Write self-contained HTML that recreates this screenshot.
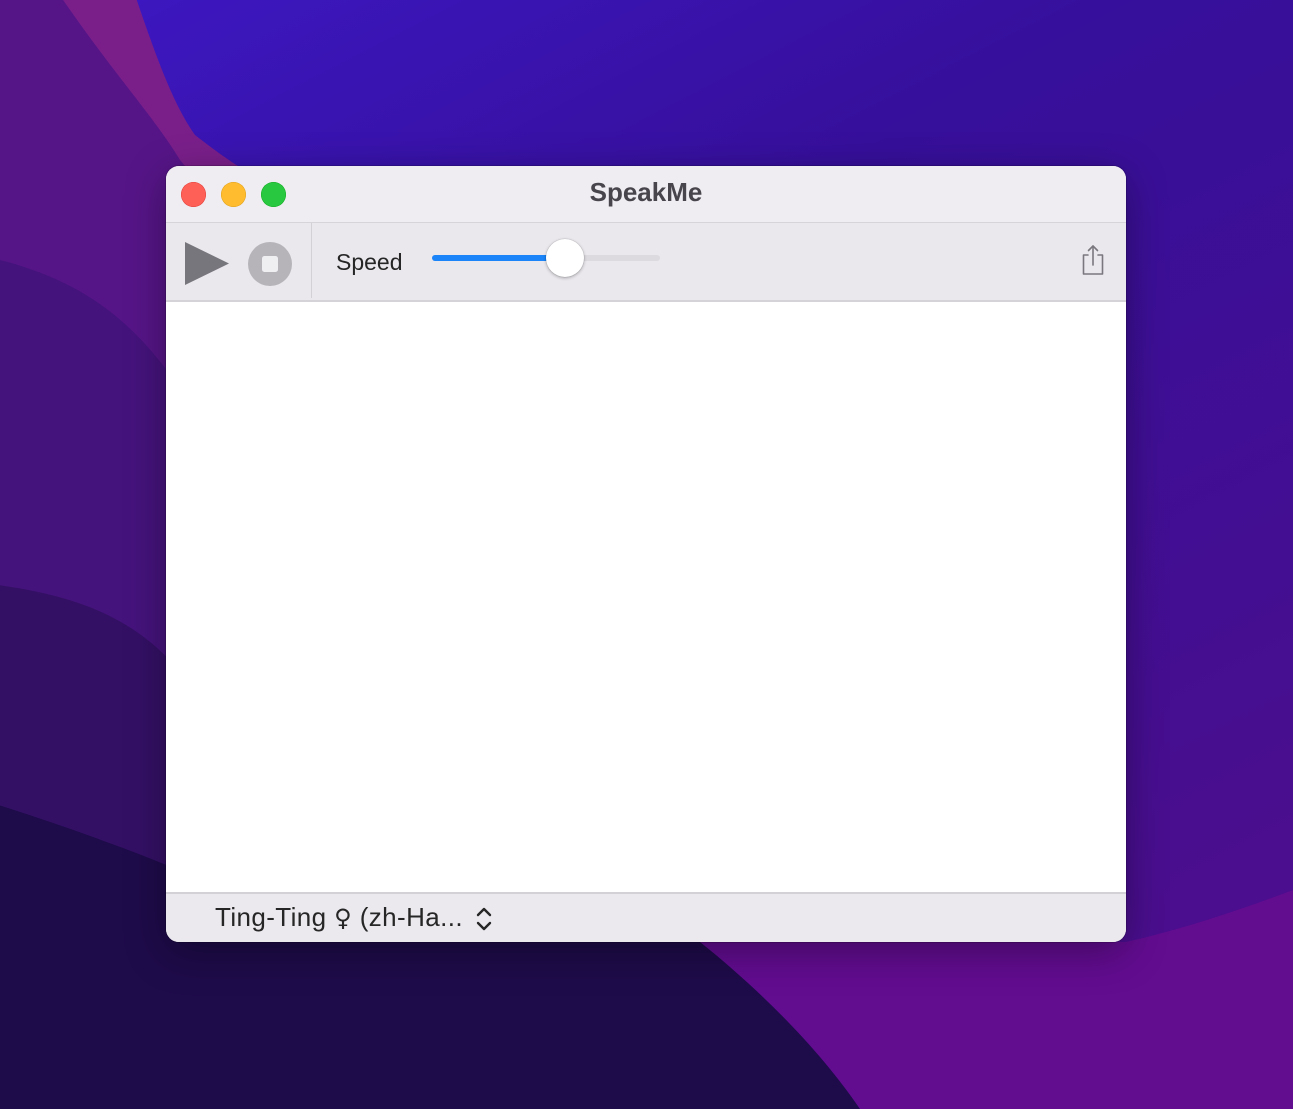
<!DOCTYPE html>
<html><head><meta charset="utf-8">
<style>
html,body{margin:0;padding:0;width:1293px;height:1109px;overflow:hidden;position:relative;font-family:"Liberation Sans","DejaVu Sans",sans-serif;}
#bg{position:absolute;left:0;top:0;display:block;overflow:hidden;}
.win{position:absolute;left:166px;top:166px;width:960px;height:776px;border-radius:13px;overflow:hidden;background:#fff;box-shadow:0 10px 40px rgba(0,0,0,0.35),0 0 0 1px rgba(0,0,0,0.15);}
.title{position:absolute;left:0;top:0;width:960px;height:56px;background:#efedf2;border-bottom:1px solid #d6d4d9;}
.title .t{position:absolute;left:0;width:960px;top:11px;text-align:center;font-weight:bold;font-size:26px;color:#48464c;}
.dot{position:absolute;top:16px;width:25px;height:25px;border-radius:50%;}
.tool{position:absolute;left:0;top:57px;width:960px;height:77px;background:#eae8ed;border-bottom:2px solid #d5d3d8;}
.vdiv{position:absolute;left:145px;top:0;width:1px;height:75px;background:#d3d1d6;}
.speed{position:absolute;left:170px;top:26px;font-size:23px;color:#262626;}
.track{position:absolute;left:266px;top:32px;width:228px;height:6px;border-radius:3px;background:#dcdadf;}
.fill{position:absolute;left:266px;top:32px;width:134px;height:6px;border-radius:3px;background:#1a84f8;}
.knob{position:absolute;left:380px;top:16px;width:38px;height:38px;border-radius:50%;background:#fff;box-shadow:0 1px 3px rgba(0,0,0,0.3),0 0 0 0.5px rgba(0,0,0,0.1);}
.foot{position:absolute;left:0;top:726px;width:960px;height:50px;background:#ebe9ee;border-top:2px solid #d3d1d6;}
.foot .v{position:absolute;left:49px;top:8px;font-size:26px;color:#262626;white-space:nowrap;letter-spacing:0.4px;}
.foot .v .s{font-family:"DejaVu Sans",sans-serif;font-size:24px;}
</style></head><body>
<svg id="bg" width="1293" height="1109" viewBox="0 0 1293 1109">
<defs>
<linearGradient id="g0" x1="0" y1="0" x2="0.6" y2="1">
<stop offset="0" stop-color="#3d18c4"/><stop offset="0.4" stop-color="#360f9a"/><stop offset="1" stop-color="#4a0e8e"/>
</linearGradient>
</defs>
<rect width="1293" height="1109" fill="url(#g0)"/>
<g>
<path d="M-50 -50 L120 -50 C150 40 170 100 195 135 C240 170 260 180 300 200 L300 1109 L-50 1109 Z" fill="#7a1f8a"/>
<path d="M-50 -50 L30 -50 C100 60 150 110 180 160 C230 220 260 280 290 330 L290 1109 L-50 1109 Z" fill="#561587"/>
<path d="M-50 250 C80 270 140 320 200 420 L200 1109 L-50 1109 Z" fill="#45137c"/>
<path d="M-50 580 C80 590 150 620 200 700 L200 1109 L-50 1109 Z" fill="#341065"/>
<path d="M640 942 L1126 942 C1180 930 1240 910 1293 890 L1293 1109 L860 1109 C800 1050 720 990 640 942 Z" fill="#620c90"/>
<path d="M-50 790 C150 850 250 900 330 942 L700 942 C760 990 820 1050 860 1109 L-50 1109 Z" fill="#1e0b4a"/>
</g>
</svg>
<div class="win">
 <div class="title">
  <div class="dot" style="left:15px;background:#fe5f57;box-shadow:inset 0 0 0 0.5px #e0443e"></div>
  <div class="dot" style="left:55px;background:#febc2e;box-shadow:inset 0 0 0 0.5px #dea123"></div>
  <div class="dot" style="left:95px;background:#28c840;box-shadow:inset 0 0 0 0.5px #1aab29"></div>
  <div class="t">SpeakMe</div>
 </div>
 <div class="tool">
  <svg style="position:absolute;left:0;top:0" width="140" height="76">
   <polygon points="19,19 19,62 63,40.5" fill="#78767d"/>
   <circle cx="104" cy="41" r="22" fill="#b6b4b9"/>
   <rect x="96" y="33" width="16" height="16" rx="2.5" fill="#efeef1"/>
  </svg>
  <div class="vdiv"></div>
  <div class="speed">Speed</div>
  <div class="track"></div><div class="fill"></div><div class="knob"></div>
  <svg style="position:absolute;left:912px;top:20px" width="30" height="36" viewBox="0 0 30 36" fill="none" stroke="#7a787e" stroke-width="1.6" stroke-linecap="round" stroke-linejoin="round">
   <path d="M10 12 H5.5 V31 H24.5 V12 H20"/>
   <path d="M15 3 V22"/>
   <path d="M10.5 7.5 L15 3 L19.5 7.5"/>
  </svg>
 </div>
 <div class="foot">
  <div class="v">Ting-Ting <span class="s">♀</span> (zh-Ha...</div>
  <svg style="position:absolute;left:308px;top:12px" width="20" height="26" viewBox="0 0 20 26" fill="none" stroke="#262626" stroke-width="2.4" stroke-linecap="round" stroke-linejoin="round">
   <path d="M4 9 L10 3 L16 9"/><path d="M4 17 L10 23 L16 17"/>
  </svg>
 </div>
</div>
</body></html>
